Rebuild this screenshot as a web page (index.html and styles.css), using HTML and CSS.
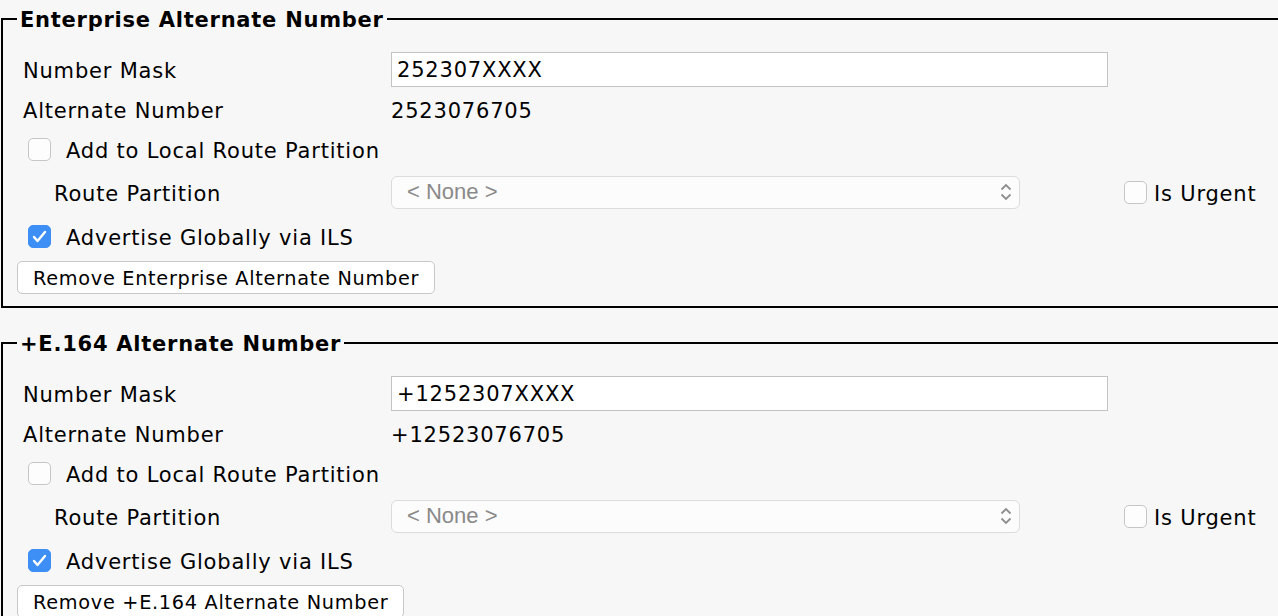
FILE: index.html
```html
<!DOCTYPE html>
<html lang="en">

<head>
    <meta charset="UTF-8">
    <meta name="viewport" content="width=device-width, initial-scale=1.0">
    <title>Alternate Numbers</title>
    <link rel="stylesheet" href="styles.css">
</head>

<body>
    <div class="page">
        <!-- Enterprise -->
        <fieldset class="altnum">
            <legend>Enterprise Alternate Number</legend>
            <div class="row row-mask">
                <span class="label">Number Mask</span>
                <input type="text" class="mask" value="252307XXXX">
            </div>
            <div class="row row-alt">
                <span class="label">Alternate Number</span>
                <span class="value">2523076705</span>
            </div>
            <div class="row row-check">
                <span class="box"></span>
                <span class="boxtext">Add to Local Route Partition</span>
            </div>
            <div class="row row-route">
                <span class="label sub">Route Partition</span>
                <div class="select">
                    <span>&lt; None &gt;</span>
                    <svg width="12" height="18" viewBox="0 0 12 18"><path d="M1.5 6.5 6 2l4.5 4.5M1.5 11.5 6 16l4.5-4.5" fill="none" stroke="#8e8e8e" stroke-width="1.8"/></svg>
                </div>
                <span class="box urgent"></span>
                <span class="urgenttext">Is Urgent</span>
            </div>
            <div class="row row-adv">
                <span class="box checked"><svg width="15" height="13" viewBox="0 0 15 13"><path d="M2 7 5.5 11 13 2" fill="none" stroke="#fff" stroke-width="2.4" stroke-linecap="round" stroke-linejoin="round"/></svg></span>
                <span class="boxtext">Advertise Globally via ILS</span>
            </div>
            <button type="button" class="btn">Remove Enterprise Alternate Number</button>
        </fieldset>

        <!-- +E.164 -->
        <fieldset class="altnum">
            <legend>+E.164 Alternate Number</legend>
            <div class="row row-mask">
                <span class="label">Number Mask</span>
                <input type="text" class="mask" value="+1252307XXXX">
            </div>
            <div class="row row-alt">
                <span class="label">Alternate Number</span>
                <span class="value">+12523076705</span>
            </div>
            <div class="row row-check">
                <span class="box"></span>
                <span class="boxtext">Add to Local Route Partition</span>
            </div>
            <div class="row row-route">
                <span class="label sub">Route Partition</span>
                <div class="select">
                    <span>&lt; None &gt;</span>
                    <svg width="12" height="18" viewBox="0 0 12 18"><path d="M1.5 6.5 6 2l4.5 4.5M1.5 11.5 6 16l4.5-4.5" fill="none" stroke="#8e8e8e" stroke-width="1.8"/></svg>
                </div>
                <span class="box urgent"></span>
                <span class="urgenttext">Is Urgent</span>
            </div>
            <div class="row row-adv">
                <span class="box checked"><svg width="15" height="13" viewBox="0 0 15 13"><path d="M2 7 5.5 11 13 2" fill="none" stroke="#fff" stroke-width="2.4" stroke-linecap="round" stroke-linejoin="round"/></svg></span>
                <span class="boxtext">Advertise Globally via ILS</span>
            </div>
            <button type="button" class="btn">Remove +E.164 Alternate Number</button>
        </fieldset>
    </div>
</body>

</html>
```

FILE: styles.css
```css
html,
body {
    margin: 0;
    background: #f7f7f7;
    overflow: hidden;
}

.page {
    padding-top: 6px;
    font-family: Verdana, "DejaVu Sans", sans-serif;
    font-size: 21px;
    letter-spacing: 0.8px;
    color: #000;
}

.altnum {
    width: 1400px;
    margin: 0 0 22px 1px;
    padding: 17px 0 12px 20px;
    border: 2px solid #000;
    box-sizing: border-box;
}

.altnum legend {
    margin-left: -6px;
    padding: 2px 3px 0 3px;
    font-weight: bold;
    font-size: 21px;
    line-height: 24px;
    letter-spacing: 0.75px;
}

.row {
    display: flex;
    align-items: center;
    height: 40px;
}

.row-route {
    height: 46px;
}

.row-adv {
    height: 42px;
}

.label,
.value,
.boxtext,
.urgenttext {
    padding-top: 3px;
}

.label {
    width: 368px;
    flex: none;
}

.label.sub {
    box-sizing: border-box;
    padding-left: 31px;
}

.mask {
    width: 717px;
    height: 35px;
    box-sizing: border-box;
    margin: 0;
    padding: 2px 0 0 5px;
    border: 1px solid #c3c3c3;
    background: #fff;
    font-family: inherit;
    font-size: 21px;
    letter-spacing: 0.8px;
    color: #000;
    outline: none;
}

.box {
    display: flex;
    align-items: center;
    justify-content: center;
    width: 23px;
    height: 23px;
    box-sizing: border-box;
    margin-left: 5px;
    border: 1px solid #c6c6c6;
    border-radius: 5px;
    background: #fdfdfd;
    flex: none;
}

.box.checked {
    border-color: #3d8ff5;
    background: #3d8ff5;
}

.boxtext {
    margin-left: 15px;
}

.select {
    display: flex;
    align-items: center;
    justify-content: space-between;
    width: 629px;
    height: 33px;
    box-sizing: border-box;
    padding: 0 7px 0 15px;
    border: 1px solid #dcdcdc;
    border-radius: 6px;
    background: #fcfcfc;
    font-family: "Liberation Sans", Arial, sans-serif;
    font-size: 22px;
    letter-spacing: 0;
    color: #8a8a8a;
}

.box.urgent {
    margin-left: 104px;
}

.urgenttext {
    margin-left: 7px;
}

.btn {
    display: block;
    height: 33px;
    margin: 4px 0 0 -6px;
    padding: 2px 15px 0 15px;
    border: 1px solid #c8c8c8;
    border-radius: 5px;
    background: #fff;
    font-family: inherit;
    font-size: 19.3px;
    letter-spacing: 0.7px;
    color: #000;
}
```
